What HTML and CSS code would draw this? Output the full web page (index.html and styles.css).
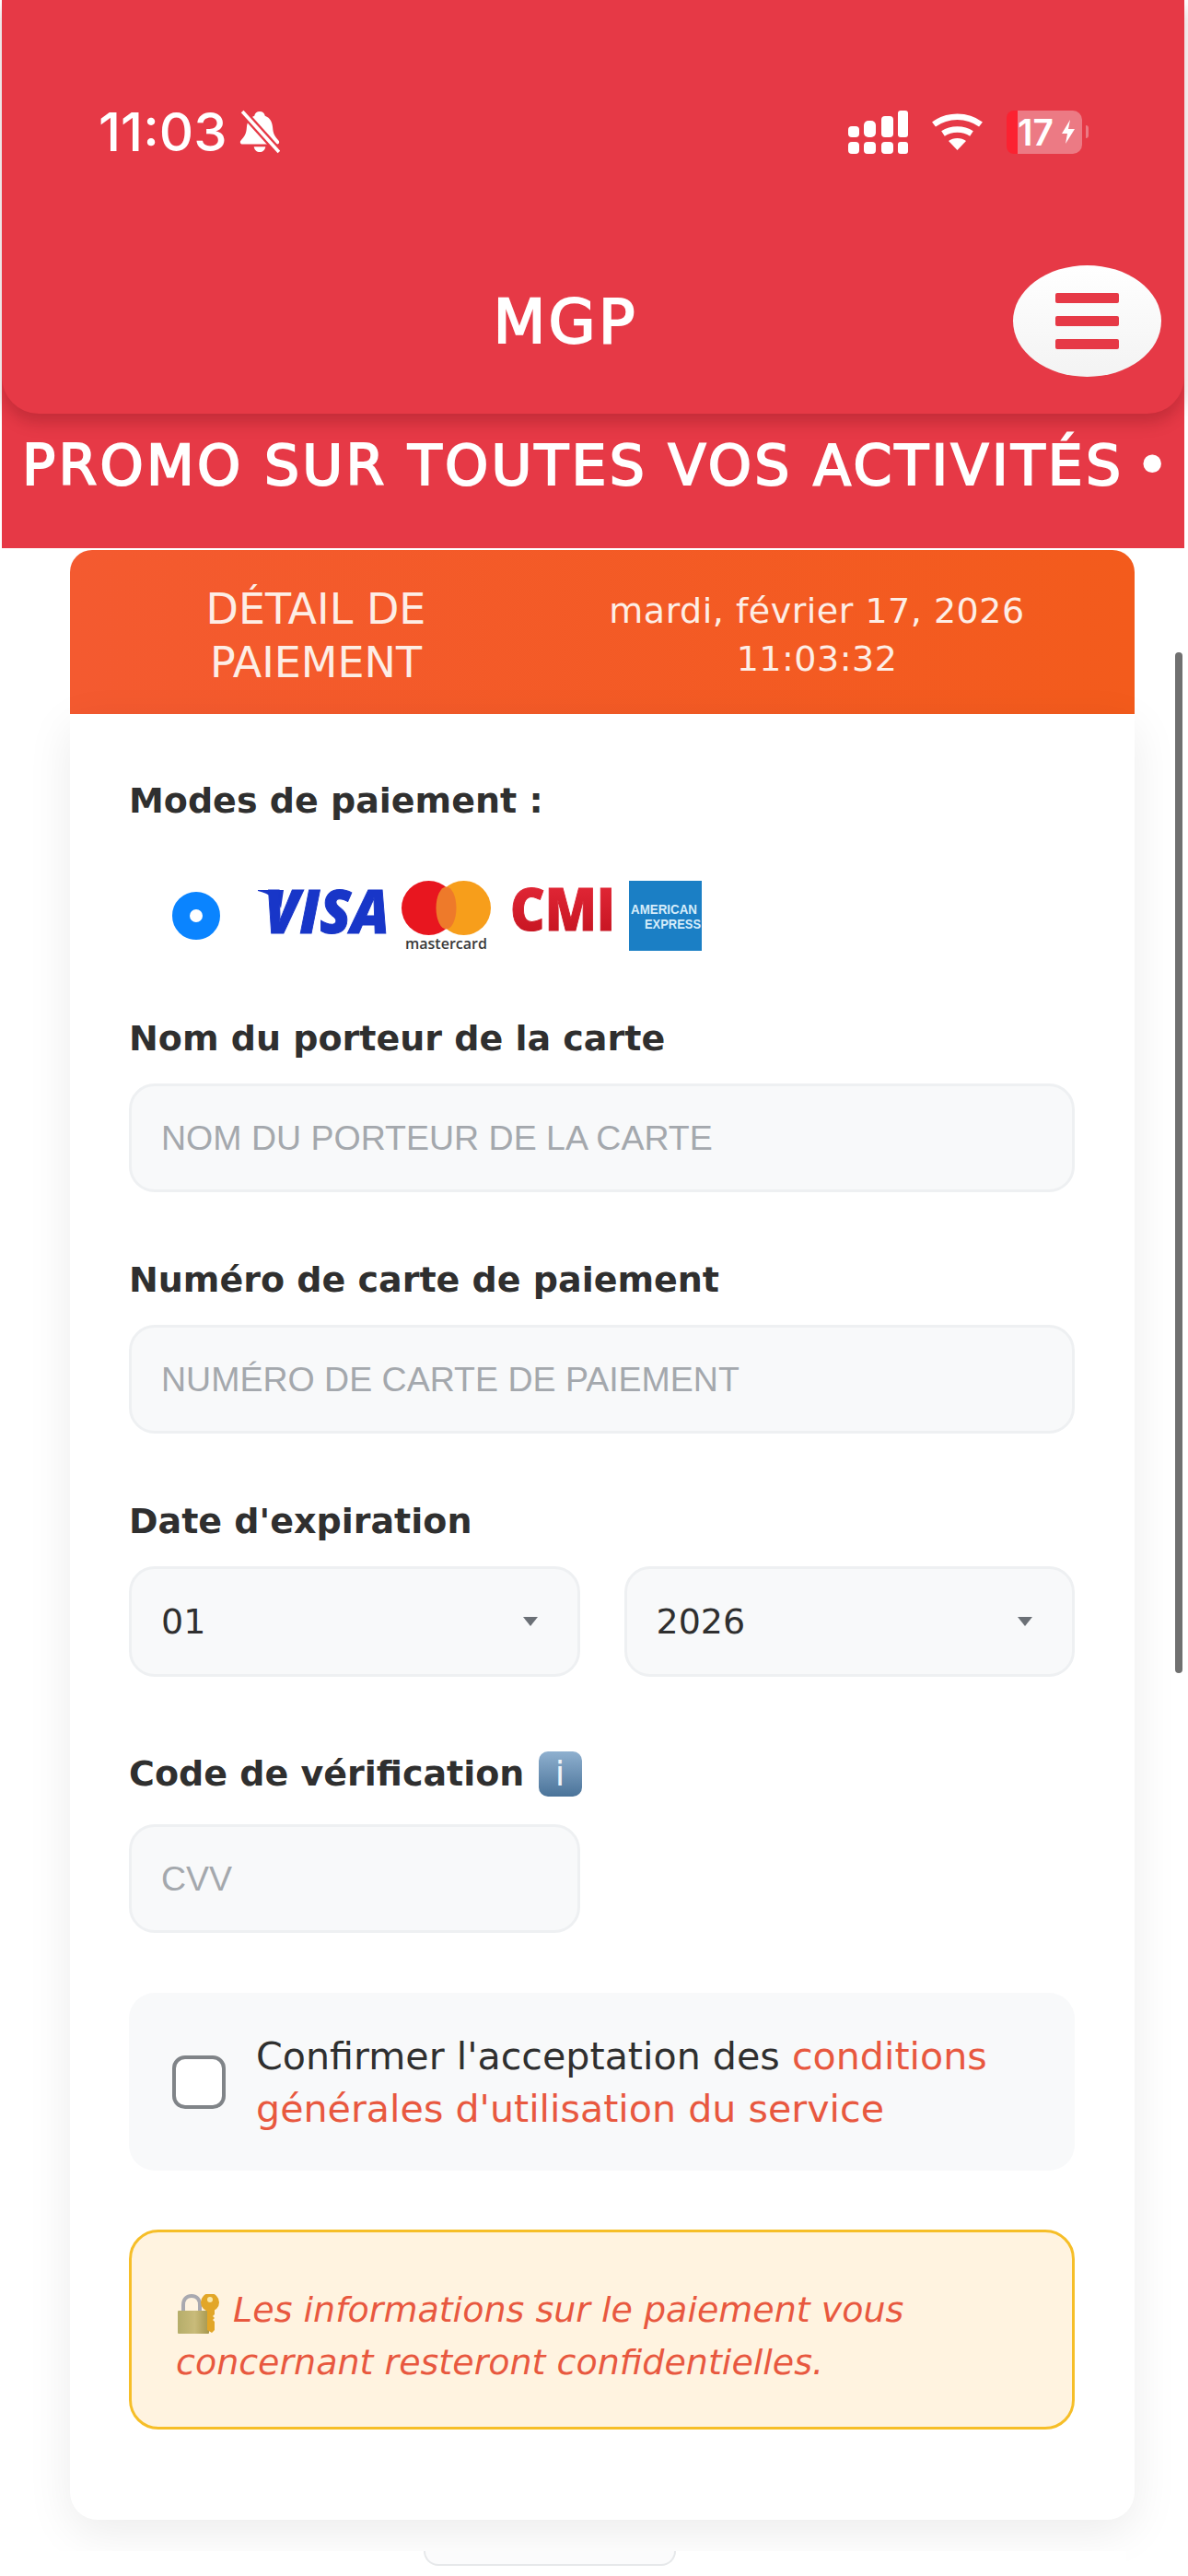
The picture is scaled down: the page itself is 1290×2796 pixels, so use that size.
FILE: index.html
```html
<!DOCTYPE html>
<html lang="fr">
<head>
  <meta charset="UTF-8">
  <meta name="viewport" content="width=device-width, initial-scale=1.0">
  <title>MGP - Détail de paiement</title>
  <link rel="stylesheet" href="styles.css">
</head>
<body>
  <!-- Top bar -->
  <header class="topbar">
    <div class="status">
      <div class="status-left">
        <span class="clock">11:03</span>
        <svg class="bell" viewBox="2 2 42 44" width="44" height="48">
          <path d="M23 3c3 0 5 2 5.500 4.500C34 9.500 36 14 36.500 20c.5 6 2 9 6 13 1.500 1.500.5 4-2 4H5.500c-2.500 0-3.500-2.500-2-4 4-4 5.500-7 6-13 .5-6 2.500-10.500 8-12.500C18 5 20 3 23 3z" fill="#fff"/>
          <path d="M17 39.500h12c-.5 3.500-3 5.500-6 5.500s-5.500-2-6-5.500z" fill="#fff"/>
          <path d="M5 3l38 42" stroke="#e63946" stroke-width="8"/>
          <path d="M5 3l38 42" stroke="#fff" stroke-width="3.500"/>
        </svg>
      </div>
      <div class="status-right">
        <svg class="signal" viewBox="0 0 65 47" width="65" height="47" fill="#fff">
          <rect x="0" y="17" width="12" height="12" rx="4"/>
          <rect x="17" y="11" width="13" height="18" rx="5"/>
          <rect x="36" y="6" width="13" height="23" rx="4"/>
          <rect x="54" y="0" width="11" height="29" rx="3"/>
          <rect x="0" y="34" width="12" height="13" rx="4"/>
          <rect x="17" y="34" width="13" height="13" rx="4"/>
          <rect x="36" y="34" width="13" height="13" rx="4"/>
          <rect x="54" y="34" width="11" height="13" rx="3"/>
        </svg>
        <svg class="wifi" viewBox="0 0 57 40" width="57" height="40" fill="none" stroke="#fff" stroke-width="6.500">
          <path d="M3 12c15-11 36-11 51 0"/>
          <path d="M13 22c9-6 22-6 31 0"/>
          <path d="M28.500 40l-9.500-10c5-4 14-4 19 0z" fill="#fff" stroke="none"/>
        </svg>
        <div class="battery">
          <span class="battery-low"></span>
          <span class="battery-level">17<svg viewBox="0 0 16 26" width="16" height="28" fill="#fff"><path d="M10 0L1 15h6l-2 11 10-16H8z"/></svg></span>
          <span class="battery-tip"></span>
        </div>
      </div>
    </div>
    <div class="appbar">
      <h1 class="app-title">MGP</h1>
      <button class="menu-btn" type="button">
        <span></span><span></span><span></span>
      </button>
    </div>
  </header>

  <!-- Promo strip -->
  <div class="promo">PROMO SUR TOUTES VOS ACTIVITÉS<span class="promo-dot">•</span></div>

  <main class="page">
    <div class="pay-head">
      <div class="pay-title">DÉTAIL DE PAIEMENT</div>
      <div class="pay-date">mardi, février 17, 2026<br>11:03:32</div>
    </div>

    <form class="pay-card">
      <div class="field field-modes">
        <label class="label">Modes de paiement :</label>
        <div class="modes">
          <span class="radio"></span>
          <svg class="logos" viewBox="0 0 490 80" width="490" height="80">
            <defs>
              <linearGradient id="cmi-red" x1="0" y1="0" x2="0" y2="1">
                <stop offset="0" stop-color="#ea2c3c"/>
                <stop offset="1" stop-color="#bf101c"/>
              </linearGradient>
            </defs>
            <!-- visa -->
            <path d="M2 10h28l-3 20C24 20 14 14 2 11z" fill="#1836c8"/>
            <text x="9" y="57" class="logo-visa" textLength="136" lengthAdjust="spacingAndGlyphs">VISA</text>
            <!-- mastercard -->
            <circle cx="187.500" cy="29.500" r="29.500" fill="#e8161f"/>
            <circle cx="225.500" cy="29.500" r="29.500" fill="#f79e1b"/>
            <ellipse cx="206.500" cy="29.500" rx="11" ry="23" fill="#ee7a2a"/>
            <text x="162" y="74" class="logo-mc" textLength="89" lengthAdjust="spacingAndGlyphs">mastercard</text>
            <!-- cmi -->
            <text x="276" y="54" class="logo-cmi" textLength="114" lengthAdjust="spacingAndGlyphs" fill="url(#cmi-red)" stroke="url(#cmi-red)">CMI</text>
            <!-- amex -->
            <rect x="405" y="0" width="79" height="76" fill="#1b7fc5"/>
            <text x="407" y="36" class="logo-amex" textLength="72" lengthAdjust="spacingAndGlyphs">AMERICAN</text>
            <text x="422" y="52" class="logo-amex" textLength="61" lengthAdjust="spacingAndGlyphs">EXPRESS</text>
          </svg>
        </div>
      </div>

      <div class="field">
        <label class="label">Nom du porteur de la carte</label>
        <input class="input" type="text" placeholder="NOM DU PORTEUR DE LA CARTE">
      </div>

      <div class="field">
        <label class="label">Numéro de carte de paiement</label>
        <input class="input" type="text" placeholder="NUMÉRO DE CARTE DE PAIEMENT">
      </div>

      <div class="field field-date">
        <label class="label">Date d'expiration</label>
        <div class="two-cols">
          <div class="select-wrap">
            <select class="select"><option>01</option></select>
          </div>
          <div class="select-wrap">
            <select class="select"><option>2026</option></select>
          </div>
        </div>
      </div>

      <div class="field field-cvv">
        <label class="label">Code de vérification <span class="info-icon">i</span></label>
        <div class="two-cols">
          <input class="input" type="text" placeholder="CVV">
        </div>
      </div>

      <label class="terms">
        <span class="checkbox"></span>
        <span class="terms-text">Confirmer l'acceptation des <span class="link">conditions générales d'utilisation du service</span></span>
      </label>

      <div class="notice">
        <svg class="lock" viewBox="0 0 46 43" width="46" height="43">
          <defs>
            <linearGradient id="lock-body" x1="0" y1="0" x2="1" y2="0">
              <stop offset="0" stop-color="#b5ad6a"/>
              <stop offset="0.55" stop-color="#c9bb7a"/>
              <stop offset="1" stop-color="#a6974e"/>
            </linearGradient>
          </defs>
          <path d="M6 19V12C6 5 10 2 15 2s9 3 9 10v7" fill="none" stroke="#a9a9b0" stroke-width="4"/>
          <rect x="0" y="18" width="34" height="25" rx="1" fill="url(#lock-body)"/>
          <circle cx="35" cy="9" r="10" fill="#e2a628"/>
          <circle cx="35" cy="6" r="3" fill="#fae8a8"/>
          <path d="M32 16h8v6l-2 2 2 2-2 2 2 2v9l-3 3-5-3z" fill="#e2a628"/>
        </svg>
        <span>Les informations sur le paiement vous concernant resteront confidentielles.</span>
      </div>
    </form>

    <div class="next-panel"><span class="next-tab"></span></div>
  </main>

  <div class="scrollbar"></div>
</body>
</html>
```

FILE: styles.css
```css
/* Base */
html, body {
  margin: 0;
  height: 2796px;
  overflow: hidden;
  background: #fff;
}

body {
  position: relative;
  padding: 0 4px 0 2px;
  box-sizing: border-box;
  display: flex;
  flex-direction: column;
  font-family: 'DejaVu Sans', sans-serif;
  color: #2f2f2f;
}

/* Top bar */
.topbar {
  flex: none;
  background: #e63946;
  height: 449px;
  border-radius: 0 0 40px 40px;
  box-shadow: 0 10px 16px rgba(100, 10, 20, 0.25);
  position: relative;
  z-index: 2;
  box-sizing: border-box;
  padding-top: 117px;
  color: #fff;
}

.status {
  display: flex;
  justify-content: space-between;
  align-items: center;
  height: 52px;
  padding: 0 104px 0 105px;
}

.status-left {
  display: flex;
  align-items: center;
  gap: 13px;
}

.clock {
  font-family: Inter, sans-serif;
  font-weight: 500;
  font-size: 58px;
}

.status-right {
  display: flex;
  align-items: center;
  gap: 25px;
}

.battery {
  display: flex;
  align-items: center;
  height: 47px;
}

.battery-low {
  width: 12px;
  height: 47px;
  background: #fb2231;
  border-radius: 8px 0 0 8px;
}

.battery-level {
  width: 70px;
  height: 47px;
  background: #ec7a84;
  border-radius: 0 10px 10px 0;
  font-family: Inter, sans-serif;
  font-weight: 600;
  font-size: 39px;
  line-height: 47px;
  display: flex;
  align-items: center;
  gap: 8px;
}

.battery-tip {
  width: 3px;
  height: 14px;
  margin-left: 4px;
  background: #ec7a84;
  border-radius: 0 3px 3px 0;
}

.appbar {
  display: flex;
  justify-content: center;
  align-items: center;
  position: relative;
  margin-top: 119px;
  height: 121px;
  padding-right: 60px;
}

.app-title {
  margin: 0;
  padding-top: 2px;
  font-size: 66px;
  font-weight: 400;
  letter-spacing: 3px;
  -webkit-text-stroke: 2px #fff;
}

.menu-btn {
  position: absolute;
  right: 25px;
  top: 0;
  width: 161px;
  height: 121px;
  border: 0;
  border-radius: 50%;
  background: linear-gradient(#fff, #f3f3f3);
  display: flex;
  flex-direction: column;
  align-items: center;
  justify-content: center;
  gap: 14px;
  padding: 0;
}

.menu-btn span {
  width: 69px;
  height: 11px;
  background: #e63946;
  border-radius: 2px;
}

/* Promo strip */
.promo {
  flex: none;
  background: #e63946;
  height: 186px;
  margin: -40px 0 2px;
  box-sizing: border-box;
  padding: 61px 0 0 22px;
  color: #fff;
  font-size: 60px;
  letter-spacing: 3.300px;
  -webkit-text-stroke: 2px #fff;
  white-space: nowrap;
  overflow: hidden;
}

.promo-dot {
  margin-left: 13px;
}

/* Main */
.page {
  flex: 1;
  padding: 0 54px 0 74px;
  display: flex;
  flex-direction: column;
}

.pay-head {
  flex: none;
  height: 178px;
  display: grid;
  grid-template-columns: 534px 554px;
  align-items: center;
  text-align: center;
  background: linear-gradient(90deg, #f45a30, #f35b1c);
  border-radius: 24px 24px 0 0;
  color: #fdeee6;
}

.pay-title {
  font-size: 46px;
  line-height: 58px;
  padding: 8px 110px 0;
}

.pay-date {
  font-size: 38px;
  line-height: 52px;
  letter-spacing: 0.500px;
  padding-top: 6px;
}

.pay-card {
  flex: none;
  height: 1960px;
  box-sizing: border-box;
  background: #fff;
  border-radius: 0 0 30px 30px;
  box-shadow: 0 14px 50px rgba(0, 0, 0, 0.08);
  padding: 72px 65px 0 64px;
  display: flex;
  flex-direction: column;
}

.field {
  margin-bottom: 73px;
}

.label {
  display: block;
  font-size: 38px;
  font-weight: 700;
  line-height: 44px;
  margin-bottom: 27px;
}

.field-modes {
  margin-bottom: 69px;
}

.field-modes .label {
  margin-bottom: 65px;
}

.field-date {
  margin-bottom: 83px;
}

.field-cvv {
  margin-bottom: 65px;
}

.field-cvv .label {
  margin-bottom: 33px;
}

.modes {
  display: flex;
  align-items: flex-start;
  height: 80px;
  padding-left: 47px;
  gap: 39px;
}

.radio {
  flex: none;
  width: 14px;
  height: 14px;
  margin-top: 12px;
  border: 19px solid #0a84ff;
  border-radius: 50%;
  background: #fff;
}

.logos {
  flex: none;
  overflow: visible;
}

.logo-visa {
  font-family: 'Open Sans', sans-serif;
  font-style: italic;
  font-weight: 800;
  font-size: 66px;
  fill: #1836c8;
  stroke: #1836c8;
  stroke-width: 1px;
}

.logo-mc {
  font-family: 'Open Sans', sans-serif;
  font-weight: 600;
  font-size: 17px;
  fill: #3a3a3a;
}

.logo-cmi {
  font-family: 'Open Sans', sans-serif;
  font-weight: 800;
  font-size: 64px;
}

.logo-amex {
  font-family: 'Liberation Sans', sans-serif;
  font-weight: 700;
  font-size: 15px;
  fill: #d5ecfa;
}

.input,
.select {
  display: block;
  width: 100%;
  height: 118px;
  box-sizing: border-box;
  border: 3px solid #eef0f2;
  border-radius: 28px;
  background: #f8f9fa;
  padding: 0 32px;
  font-family: 'DejaVu Sans', sans-serif;
  font-size: 38px;
  color: #2f2f2f;
}

.input::placeholder {
  font-family: 'Liberation Sans', sans-serif;
  font-size: 37.500px;
  color: #a4a8ad;
  opacity: 1;
}

.select {
  appearance: none;
  -webkit-appearance: none;
  height: 120px;
}

.select-wrap {
  position: relative;
}

.select-wrap::after {
  content: "";
  position: absolute;
  right: 46px;
  top: 55px;
  border-left: 8px solid transparent;
  border-right: 8px solid transparent;
  border-top: 10px solid #6b7076;
}

.two-cols {
  display: grid;
  grid-template-columns: 1fr 1fr;
  gap: 48px;
}

.info-icon {
  display: inline-block;
  width: 47px;
  height: 49px;
  line-height: 49px;
  margin: -10px 0 -10px 2px;
  border-radius: 10px;
  background: linear-gradient(#8fb0cf, #4a7399);
  color: #eef4f9;
  text-align: center;
  font-size: 38px;
  font-weight: 400;
  vertical-align: 0;
}

.terms {
  flex: none;
  display: flex;
  align-items: center;
  gap: 33px;
  height: 193px;
  box-sizing: border-box;
  background: #f8f9fa;
  border-radius: 28px;
  padding: 0 30px 0 47px;
  font-size: 41.200px;
  line-height: 57px;
}

.terms-text {
  padding-top: 2px;
}

.checkbox {
  flex: none;
  width: 50px;
  height: 50px;
  border: 4px solid #808488;
  border-radius: 14px;
  background: #fff;
}

.link {
  color: #e8583f;
}

.notice {
  flex: none;
  margin-top: 64px;
  height: 217px;
  box-sizing: border-box;
  border: 3px solid #f6be28;
  border-radius: 32px;
  background: #fff3e0;
  padding: 56px 40px 0 48px;
  color: #e8583f;
  font-size: 38px;
  font-style: italic;
  line-height: 57px;
}

.lock {
  height: 43px;
  margin: -10px 2px -10px 2px;
  vertical-align: -3px;
}

/* Panel peeking in at the bottom */
.next-panel {
  margin: 34px 9px 0 -10px;
  flex: 1;
  padding-right: 95px;
  background: #fff;
  display: flex;
  justify-content: center;
}

.next-tab {
  width: 270px;
  height: 14px;
  border: 2px solid #e6e8ea;
  border-top: 0;
  border-radius: 0 0 22px 22px;
  background: #fbfbfc;
}

/* Overlay scrollbar */
.scrollbar {
  position: absolute;
  right: 6px;
  top: 708px;
  width: 8px;
  height: 1108px;
  border-radius: 4px;
  background: #707070;
}
```
